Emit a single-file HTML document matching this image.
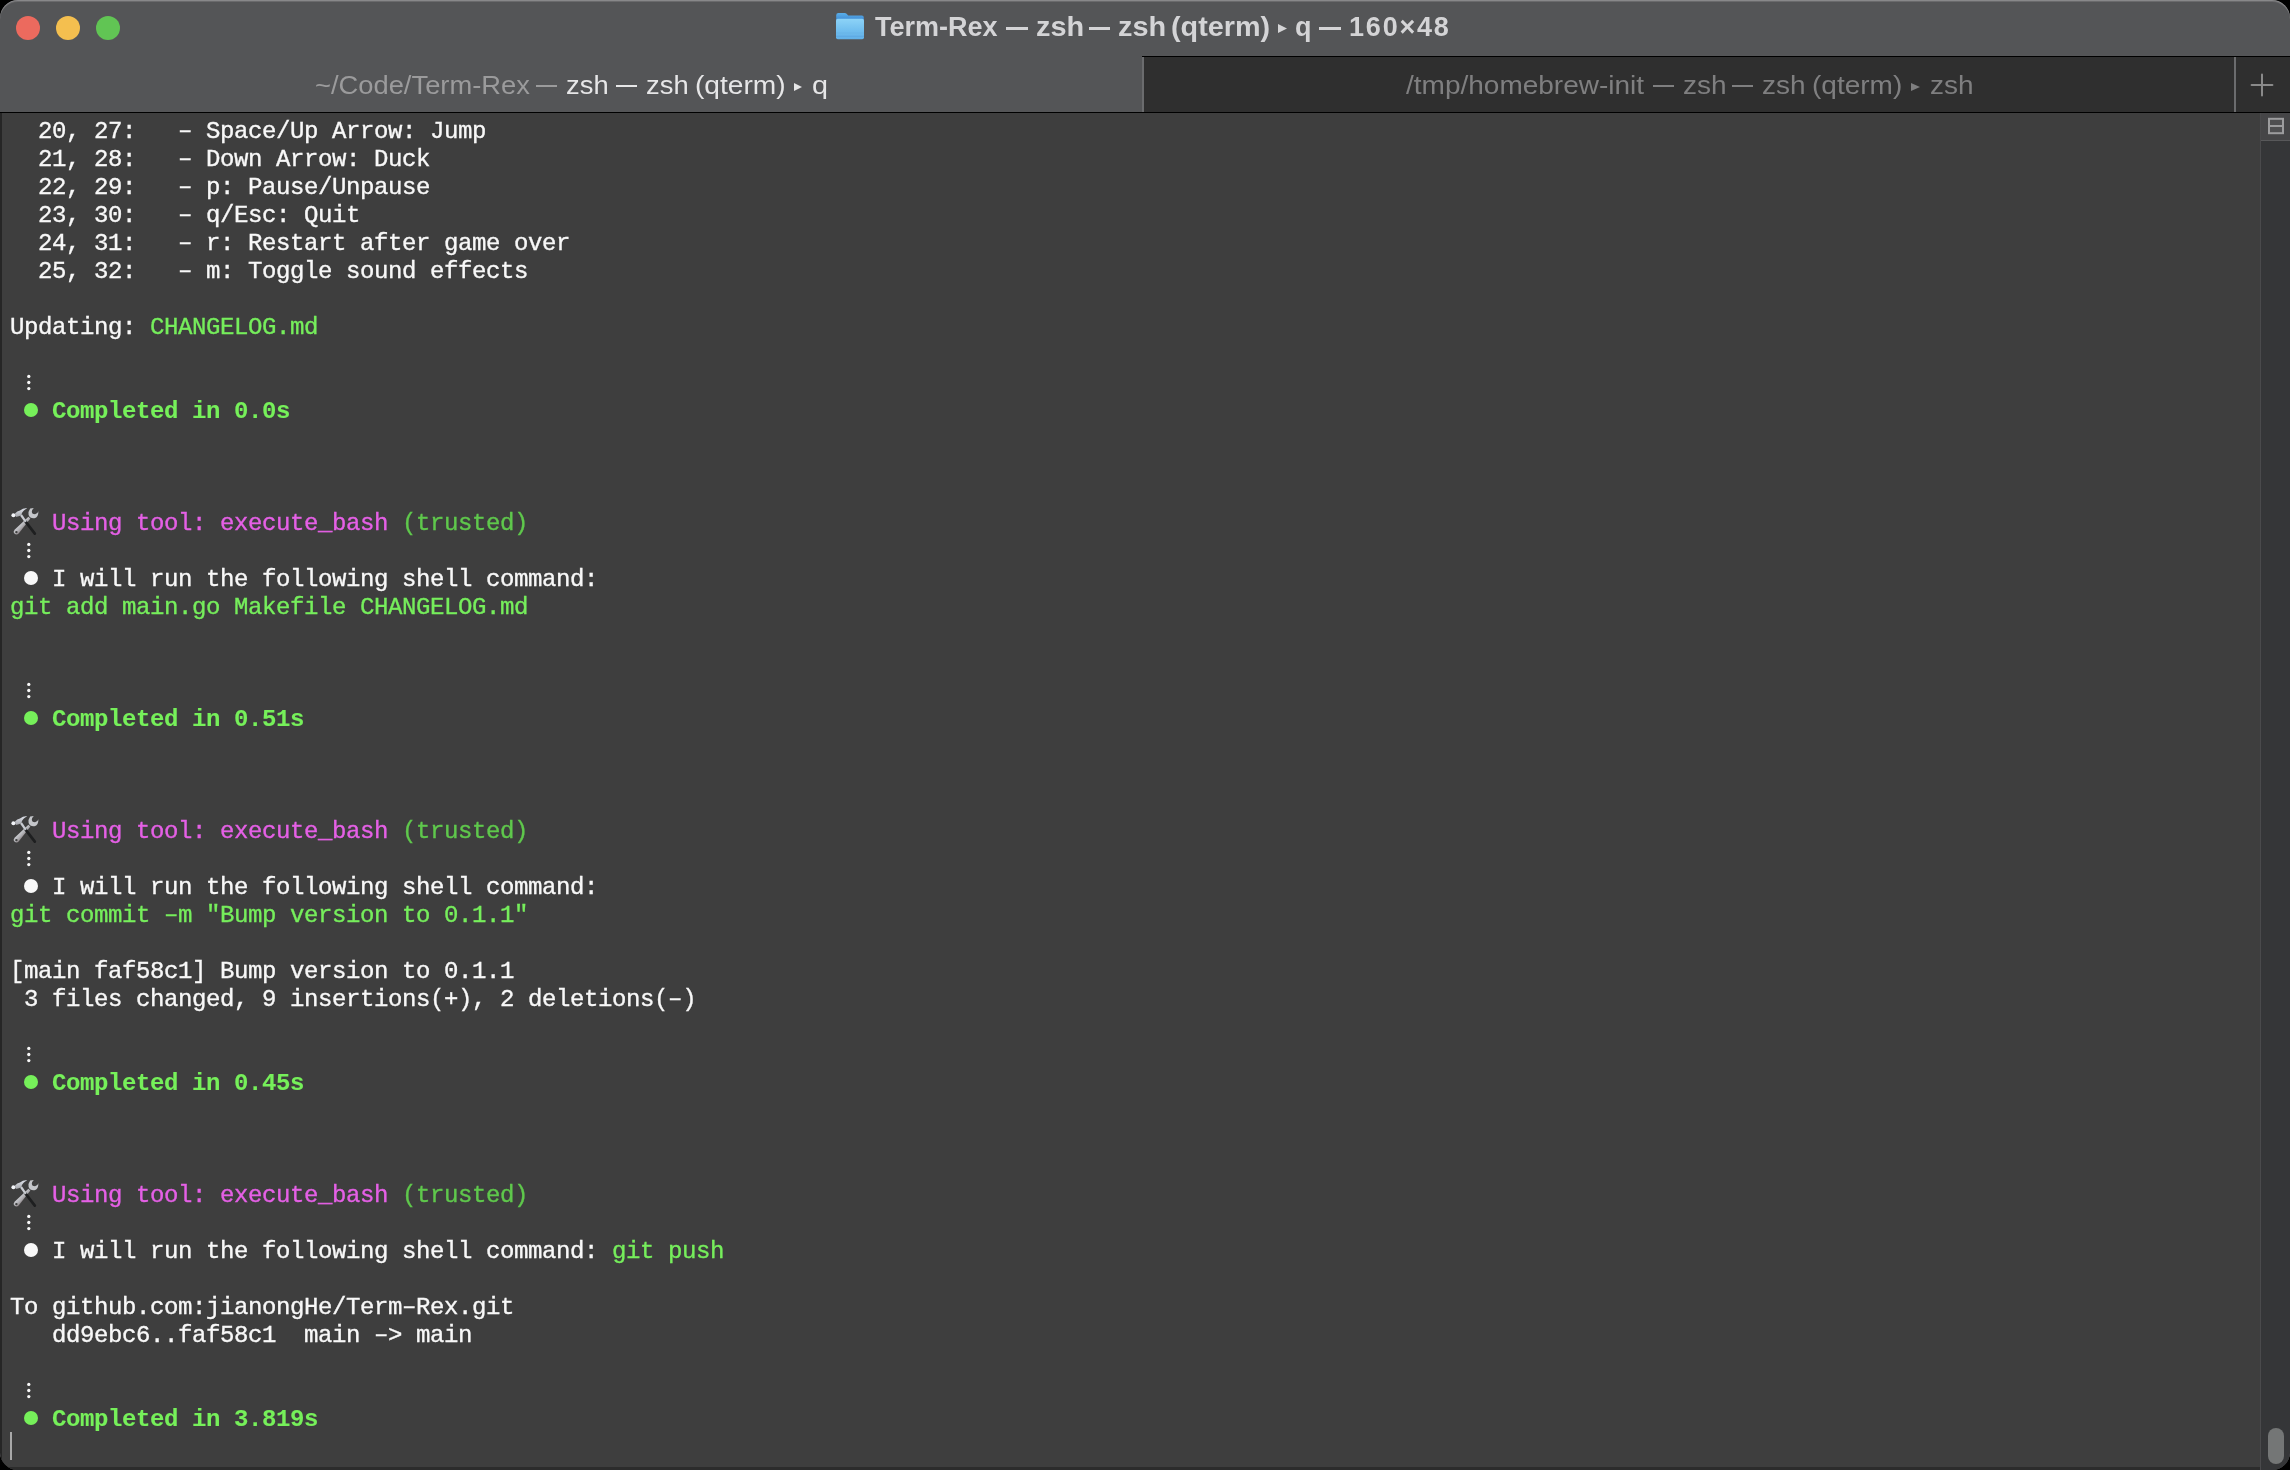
<!DOCTYPE html>
<html><head><meta charset="utf-8"><style>
html,body{margin:0;padding:0;background:#000;width:2290px;height:1470px;overflow:hidden}
.win{position:absolute;left:0;top:0;width:2290px;height:1470px;border-radius:18px;overflow:hidden;background:#3e3e3e}
.title{position:absolute;left:0;top:0;width:2290px;height:56px;background:#545557}
.light{position:absolute;top:16px;width:24px;height:24px;border-radius:50%}
.ttw{position:absolute;will-change:transform;font:bold 27px/34px "Liberation Sans",sans-serif;white-space:pre}
.tabs{position:absolute;left:0;top:56px;width:2290px;height:56px;background:#2f2f2f}
.tab1{position:absolute;left:0;top:0;width:1142px;height:56px;background:#545557}
.tline{position:absolute;left:1142px;top:0;width:1148px;height:1px;background:#000}
.div{position:absolute;top:1px;width:2px;height:55px;background:#6b6c6e}
.tbw{position:absolute;will-change:transform;font:25px/32px "Liberation Sans",sans-serif;white-space:pre}
.tri{font-size:14px;vertical-align:2px}
.bline{position:absolute;left:0;top:112px;width:2290px;height:1px;background:#000}
.term{position:absolute;left:0;top:113px;width:2290px;height:1357px;background:#3e3e3e}
.row{position:absolute;left:0;height:28px;width:2250px;will-change:transform}
.t{position:absolute;top:2px;font:24px/28px "Liberation Mono",monospace;letter-spacing:-0.4px;white-space:pre;color:#f8f8f8;-webkit-text-stroke:0.35px currentColor}
.hy{position:relative;top:-1.5px}
.b{font-weight:bold;-webkit-text-stroke:0.1px currentColor}
.bul{position:absolute;top:6.8px;width:14.2px;height:14.2px;border-radius:50%}
.dots{position:absolute;top:0;width:14px;height:28px}
.dots i{position:absolute;left:2.9px;width:3.8px;height:3.8px;border-radius:50%;background:#f2f2f2}
.dots i:nth-child(1){top:6.5px}.dots i:nth-child(2){top:12.6px}.dots i:nth-child(3){top:18.7px}
.ham{position:absolute;left:6px;top:-4px}
.sb{position:absolute;left:2260px;top:113px;width:30px;height:1357px;background:#353638;border-left:1px solid #4a4a4c;box-sizing:border-box}
.sbh{position:absolute;left:0;top:0;width:29px;height:28px;background:#454547;border-bottom:1px solid #58585a;box-sizing:border-box}
.thumb{position:absolute;left:7px;top:1315px;width:16px;height:36px;border-radius:8px;background:#747676}
.cursor{position:absolute;left:10px;top:1432px;width:2px;height:28px;background:#a8a8a8}
.lb{position:absolute;left:0;top:113px;width:2px;height:1357px;background:#262626}
.edge{position:absolute;left:0;top:0;width:2290px;height:1470px;border-radius:18px;box-shadow:inset 0 1px 0 0 #88888a,inset 0 2px 0 0 #6a6a6c;pointer-events:none}
.btm{position:absolute;left:0;top:1467px;width:2260px;height:3px;background:#2c2c2c}
</style></head><body><div class="win">
<div class="title">
<div class="light" style="left:16px;background:#ec6a5e"></div>
<div class="light" style="left:56px;background:#f4bf4f"></div>
<div class="light" style="left:96px;background:#61c554"></div>
</div>
<svg width="30" height="28" viewBox="0 0 30 28" style="position:absolute;left:835px;top:12px"><defs><linearGradient id="fg" x1="0" y1="0" x2="0" y2="1"><stop offset="0" stop-color="#8dd3f7"/><stop offset="0.5" stop-color="#74c1f0"/><stop offset="1" stop-color="#62b0e8"/></linearGradient><linearGradient id="fb" x1="0" y1="0" x2="0" y2="1"><stop offset="0" stop-color="#5aaee8"/><stop offset="1" stop-color="#3b86d2"/></linearGradient></defs>
<path d="M1.2 3.2 Q1.2 1 3.4 1 L9.6 1 Q10.8 1 11.6 1.8 L13.2 3.6 L26.8 3.6 Q28.8 3.6 28.8 5.6 L28.8 9 L1.2 9 Z" fill="url(#fb)"/>
<rect x="1" y="6.8" width="28" height="20.4" rx="1.8" fill="url(#fg)"/>
<rect x="1" y="20.6" width="28" height="1" fill="#68b4e6" opacity="0.8"/>
<rect x="1" y="23.8" width="28" height="0.9" fill="#5aa4de" opacity="0.8"/>
</svg>
<span class="ttw" style="left:875px;top:9.8px;color:#d4d4d6;">Term-Rex</span>
<div style="position:absolute;left:1006px;top:26.5px;width:22px;height:3.2px;background:#d4d4d6"></div>
<span class="ttw" style="left:1036px;top:9.8px;color:#d4d4d6;transform:scaleX(1.07);transform-origin:0 0;">zsh</span>
<div style="position:absolute;left:1089px;top:26.5px;width:21px;height:3.2px;background:#d4d4d6"></div>
<span class="ttw" style="left:1118px;top:9.8px;color:#d4d4d6;transform:scaleX(1.07);transform-origin:0 0;">zsh</span>
<span class="ttw" style="left:1171px;top:9.8px;color:#d4d4d6;transform:scaleX(1.065);transform-origin:0 0;">(qterm)</span>
<svg style="position:absolute;left:1278px;top:24px" width="9" height="9" viewBox="0 0 10 10" preserveAspectRatio="none"><path d="M0 0L10 5L0 10Z" fill="#d4d4d6"/></svg>
<span class="ttw" style="left:1295px;top:9.8px;color:#d4d4d6;">q</span>
<div style="position:absolute;left:1319px;top:26.5px;width:22px;height:3.2px;background:#d4d4d6"></div>
<span class="ttw" style="left:1349px;top:9.8px;color:#d4d4d6;letter-spacing:1.8px;">160×48</span>
<div class="tabs">
<div class="tab1"></div>
<div class="tline"></div>
<div class="div" style="left:1142px"></div>
<div class="div" style="left:2234px"></div>
<span class="tbw" style="left:315px;top:12.7px;color:#9b9b9c;transform:scaleX(1.093);transform-origin:0 0;">~/Code/Term-Rex</span>
<div style="position:absolute;left:536px;top:29.200000000000003px;width:21px;height:2.2px;background:#9b9b9c"></div>
<span class="tbw" style="left:566px;top:12.7px;color:#e6e6e7;transform:scaleX(1.095);transform-origin:0 0;">zsh</span>
<div style="position:absolute;left:616px;top:29.200000000000003px;width:21px;height:2.2px;background:#e6e6e7"></div>
<span class="tbw" style="left:645.5px;top:12.7px;color:#e6e6e7;transform:scaleX(1.095);transform-origin:0 0;">zsh</span>
<span class="tbw" style="left:695px;top:12.7px;color:#e6e6e7;transform:scaleX(1.125);transform-origin:0 0;">(qterm)</span>
<svg style="position:absolute;left:794px;top:26.799999999999997px" width="8" height="8" viewBox="0 0 10 10" preserveAspectRatio="none"><path d="M0 0L10 5L0 10Z" fill="#e6e6e7"/></svg>
<span class="tbw" style="left:811.5px;top:12.7px;color:#e6e6e7;transform:scaleX(1.15);transform-origin:0 0;">q</span>
<span class="tbw" style="left:1405.5px;top:12.7px;color:#7f7f80;transform:scaleX(1.12);transform-origin:0 0;">/tmp/homebrew-init</span>
<div style="position:absolute;left:1653px;top:29.200000000000003px;width:21px;height:2.2px;background:#7f7f80"></div>
<span class="tbw" style="left:1683px;top:12.7px;color:#7f7f80;transform:scaleX(1.12);transform-origin:0 0;">zsh</span>
<div style="position:absolute;left:1732px;top:29.200000000000003px;width:21px;height:2.2px;background:#7f7f80"></div>
<span class="tbw" style="left:1762px;top:12.7px;color:#7f7f80;transform:scaleX(1.12);transform-origin:0 0;">zsh</span>
<span class="tbw" style="left:1811.5px;top:12.7px;color:#7f7f80;transform:scaleX(1.12);transform-origin:0 0;">(qterm)</span>
<svg style="position:absolute;left:1911px;top:26.799999999999997px" width="9" height="8" viewBox="0 0 10 10" preserveAspectRatio="none"><path d="M0 0L10 5L0 10Z" fill="#7f7f80"/></svg>
<span class="tbw" style="left:1929.5px;top:12.7px;color:#7f7f80;transform:scaleX(1.12);transform-origin:0 0;">zsh</span>
<svg style="position:absolute;left:2250px;top:17px" width="24" height="24" viewBox="0 0 24 24"><path d="M12 1.6V22.4M1.6 12H22.4" stroke="#8a8a8a" stroke-width="2" stroke-linecap="round"/></svg>
</div>
<div class="bline"></div>
<div class="term">
</div>
<div class="lb"></div>
<div class="row" style="top:116px"><span class="t " style="left:38.00px;color:#f8f8f8">20, 27:   <span class=hy>–</span> Space/Up Arrow: Jump</span></div>
<div class="row" style="top:144px"><span class="t " style="left:38.00px;color:#f8f8f8">21, 28:   <span class=hy>–</span> Down Arrow: Duck</span></div>
<div class="row" style="top:172px"><span class="t " style="left:38.00px;color:#f8f8f8">22, 29:   <span class=hy>–</span> p: Pause/Unpause</span></div>
<div class="row" style="top:200px"><span class="t " style="left:38.00px;color:#f8f8f8">23, 30:   <span class=hy>–</span> q/Esc: Quit</span></div>
<div class="row" style="top:228px"><span class="t " style="left:38.00px;color:#f8f8f8">24, 31:   <span class=hy>–</span> r: Restart after game over</span></div>
<div class="row" style="top:256px"><span class="t " style="left:38.00px;color:#f8f8f8">25, 32:   <span class=hy>–</span> m: Toggle sound effects</span></div>
<div class="row" style="top:312px"><span class="t " style="left:10.00px;color:#f8f8f8">Updating: </span><span class="t " style="left:150.00px;color:#76ee5c">CHANGELOG.md</span></div>
<div class="row" style="top:368px"><svg class="dots" style="left:24.0px" width="14" height="28" viewBox="0 0 14 28"><circle cx="4.8" cy="8.4" r="1.65" fill="#f8f8f8"/><circle cx="4.8" cy="14.5" r="1.65" fill="#f8f8f8"/><circle cx="4.8" cy="20.6" r="1.65" fill="#f8f8f8"/></svg></div>
<div class="row" style="top:396px"><span class="bul" style="left:24px;background:#76f05a"></span><span class="t b" style="left:52.00px;color:#76f05a">Completed in 0.0s</span></div>
<div class="row" style="top:508px"><svg class="ham" width="36" height="36" viewBox="0 0 36 36"><defs><linearGradient id="hg" x1="0" y1="0" x2="0" y2="1"><stop offset="0" stop-color="#dfe3ec"/><stop offset="1" stop-color="#a4a5aa"/></linearGradient><linearGradient id="wg" x1="0.3" y1="0.3" x2="0.7" y2="0.7"><stop offset="0" stop-color="#dfe1e6"/><stop offset="0.55" stop-color="#b0b0b4"/><stop offset="1" stop-color="#7a6a6c"/></linearGradient></defs>
<path d="M22.4 12.8 L24.4 14.6 L12.9 29.3 Q10.6 31.6 8.4 29.6 Q6.8 28 8.6 25.8 Z" fill="url(#wg)"/>
<circle cx="10.4" cy="28.1" r="1.2" fill="#3e3e3e"/>
<path d="M24.2 4.2 Q22 7 22.6 10.8 Q24 14.5 28.5 14 Q32.5 13 32.4 7 Q31.5 9.8 29 10 Q26 10 25.8 7.5 Q25.6 5.5 27.8 3.6 Z" fill="#c4c6ca" transform="translate(0 0.3)"/>
<path d="M19.6 17.6 L28.8 29.6" stroke="#1e1f20" stroke-width="2.7" stroke-linecap="round"/>
<path d="M15 11 L19.8 17.8" stroke="#c9ccd2" stroke-width="2.2"/>
<path d="M9 9.4 Q11 7 14 6.6 Q17.6 3.8 21.2 4.4 Q16.6 5.8 15.2 11.2 Q13 12.6 9.8 12.9 Z" fill="url(#hg)"/>
<circle cx="7.4" cy="11.2" r="2" fill="#f2f4f8"/>
</svg><span class="t " style="left:52.00px;color:#e560e6">Using tool: execute_bash </span><span class="t " style="left:402.00px;color:#5fc84c">(trusted)</span></div>
<div class="row" style="top:536px"><svg class="dots" style="left:24.0px" width="14" height="28" viewBox="0 0 14 28"><circle cx="4.8" cy="8.4" r="1.65" fill="#f8f8f8"/><circle cx="4.8" cy="14.5" r="1.65" fill="#f8f8f8"/><circle cx="4.8" cy="20.6" r="1.65" fill="#f8f8f8"/></svg></div>
<div class="row" style="top:564px"><span class="bul" style="left:24px;background:#f8f8f8"></span><span class="t " style="left:52.00px;color:#f8f8f8">I will run the following shell command:</span></div>
<div class="row" style="top:592px"><span class="t " style="left:10.00px;color:#76ee5c">git add main.go Makefile CHANGELOG.md</span></div>
<div class="row" style="top:676px"><svg class="dots" style="left:24.0px" width="14" height="28" viewBox="0 0 14 28"><circle cx="4.8" cy="8.4" r="1.65" fill="#f8f8f8"/><circle cx="4.8" cy="14.5" r="1.65" fill="#f8f8f8"/><circle cx="4.8" cy="20.6" r="1.65" fill="#f8f8f8"/></svg></div>
<div class="row" style="top:704px"><span class="bul" style="left:24px;background:#76f05a"></span><span class="t b" style="left:52.00px;color:#76f05a">Completed in 0.51s</span></div>
<div class="row" style="top:816px"><svg class="ham" width="36" height="36" viewBox="0 0 36 36"><defs><linearGradient id="hg" x1="0" y1="0" x2="0" y2="1"><stop offset="0" stop-color="#dfe3ec"/><stop offset="1" stop-color="#a4a5aa"/></linearGradient><linearGradient id="wg" x1="0.3" y1="0.3" x2="0.7" y2="0.7"><stop offset="0" stop-color="#dfe1e6"/><stop offset="0.55" stop-color="#b0b0b4"/><stop offset="1" stop-color="#7a6a6c"/></linearGradient></defs>
<path d="M22.4 12.8 L24.4 14.6 L12.9 29.3 Q10.6 31.6 8.4 29.6 Q6.8 28 8.6 25.8 Z" fill="url(#wg)"/>
<circle cx="10.4" cy="28.1" r="1.2" fill="#3e3e3e"/>
<path d="M24.2 4.2 Q22 7 22.6 10.8 Q24 14.5 28.5 14 Q32.5 13 32.4 7 Q31.5 9.8 29 10 Q26 10 25.8 7.5 Q25.6 5.5 27.8 3.6 Z" fill="#c4c6ca" transform="translate(0 0.3)"/>
<path d="M19.6 17.6 L28.8 29.6" stroke="#1e1f20" stroke-width="2.7" stroke-linecap="round"/>
<path d="M15 11 L19.8 17.8" stroke="#c9ccd2" stroke-width="2.2"/>
<path d="M9 9.4 Q11 7 14 6.6 Q17.6 3.8 21.2 4.4 Q16.6 5.8 15.2 11.2 Q13 12.6 9.8 12.9 Z" fill="url(#hg)"/>
<circle cx="7.4" cy="11.2" r="2" fill="#f2f4f8"/>
</svg><span class="t " style="left:52.00px;color:#e560e6">Using tool: execute_bash </span><span class="t " style="left:402.00px;color:#5fc84c">(trusted)</span></div>
<div class="row" style="top:844px"><svg class="dots" style="left:24.0px" width="14" height="28" viewBox="0 0 14 28"><circle cx="4.8" cy="8.4" r="1.65" fill="#f8f8f8"/><circle cx="4.8" cy="14.5" r="1.65" fill="#f8f8f8"/><circle cx="4.8" cy="20.6" r="1.65" fill="#f8f8f8"/></svg></div>
<div class="row" style="top:872px"><span class="bul" style="left:24px;background:#f8f8f8"></span><span class="t " style="left:52.00px;color:#f8f8f8">I will run the following shell command:</span></div>
<div class="row" style="top:900px"><span class="t " style="left:10.00px;color:#76ee5c">git commit <span class=hy>–</span>m &quot;Bump version to 0.1.1&quot;</span></div>
<div class="row" style="top:956px"><span class="t " style="left:10.00px;color:#f8f8f8">[main faf58c1] Bump version to 0.1.1</span></div>
<div class="row" style="top:984px"><span class="t " style="left:24.00px;color:#f8f8f8">3 files changed, 9 insertions(+), 2 deletions(<span class=hy>–</span>)</span></div>
<div class="row" style="top:1040px"><svg class="dots" style="left:24.0px" width="14" height="28" viewBox="0 0 14 28"><circle cx="4.8" cy="8.4" r="1.65" fill="#f8f8f8"/><circle cx="4.8" cy="14.5" r="1.65" fill="#f8f8f8"/><circle cx="4.8" cy="20.6" r="1.65" fill="#f8f8f8"/></svg></div>
<div class="row" style="top:1068px"><span class="bul" style="left:24px;background:#76f05a"></span><span class="t b" style="left:52.00px;color:#76f05a">Completed in 0.45s</span></div>
<div class="row" style="top:1180px"><svg class="ham" width="36" height="36" viewBox="0 0 36 36"><defs><linearGradient id="hg" x1="0" y1="0" x2="0" y2="1"><stop offset="0" stop-color="#dfe3ec"/><stop offset="1" stop-color="#a4a5aa"/></linearGradient><linearGradient id="wg" x1="0.3" y1="0.3" x2="0.7" y2="0.7"><stop offset="0" stop-color="#dfe1e6"/><stop offset="0.55" stop-color="#b0b0b4"/><stop offset="1" stop-color="#7a6a6c"/></linearGradient></defs>
<path d="M22.4 12.8 L24.4 14.6 L12.9 29.3 Q10.6 31.6 8.4 29.6 Q6.8 28 8.6 25.8 Z" fill="url(#wg)"/>
<circle cx="10.4" cy="28.1" r="1.2" fill="#3e3e3e"/>
<path d="M24.2 4.2 Q22 7 22.6 10.8 Q24 14.5 28.5 14 Q32.5 13 32.4 7 Q31.5 9.8 29 10 Q26 10 25.8 7.5 Q25.6 5.5 27.8 3.6 Z" fill="#c4c6ca" transform="translate(0 0.3)"/>
<path d="M19.6 17.6 L28.8 29.6" stroke="#1e1f20" stroke-width="2.7" stroke-linecap="round"/>
<path d="M15 11 L19.8 17.8" stroke="#c9ccd2" stroke-width="2.2"/>
<path d="M9 9.4 Q11 7 14 6.6 Q17.6 3.8 21.2 4.4 Q16.6 5.8 15.2 11.2 Q13 12.6 9.8 12.9 Z" fill="url(#hg)"/>
<circle cx="7.4" cy="11.2" r="2" fill="#f2f4f8"/>
</svg><span class="t " style="left:52.00px;color:#e560e6">Using tool: execute_bash </span><span class="t " style="left:402.00px;color:#5fc84c">(trusted)</span></div>
<div class="row" style="top:1208px"><svg class="dots" style="left:24.0px" width="14" height="28" viewBox="0 0 14 28"><circle cx="4.8" cy="8.4" r="1.65" fill="#f8f8f8"/><circle cx="4.8" cy="14.5" r="1.65" fill="#f8f8f8"/><circle cx="4.8" cy="20.6" r="1.65" fill="#f8f8f8"/></svg></div>
<div class="row" style="top:1236px"><span class="bul" style="left:24px;background:#f8f8f8"></span><span class="t " style="left:52.00px;color:#f8f8f8">I will run the following shell command:</span><span class="t " style="left:612.00px;color:#76ee5c">git push</span></div>
<div class="row" style="top:1292px"><span class="t " style="left:10.00px;color:#f8f8f8">To github.com:jianongHe/Term<span class=hy>–</span>Rex.git</span></div>
<div class="row" style="top:1320px"><span class="t " style="left:52.00px;color:#f8f8f8">dd9ebc6..faf58c1  main <span class=hy>–</span>&gt; main</span></div>
<div class="row" style="top:1376px"><svg class="dots" style="left:24.0px" width="14" height="28" viewBox="0 0 14 28"><circle cx="4.8" cy="8.4" r="1.65" fill="#f8f8f8"/><circle cx="4.8" cy="14.5" r="1.65" fill="#f8f8f8"/><circle cx="4.8" cy="20.6" r="1.65" fill="#f8f8f8"/></svg></div>
<div class="row" style="top:1404px"><span class="bul" style="left:24px;background:#76f05a"></span><span class="t b" style="left:52.00px;color:#76f05a">Completed in 3.819s</span></div>
<div class="cursor"></div>
<div class="sb"><div class="sbh"><svg style="position:absolute;left:6px;top:4px" width="18" height="18" viewBox="0 0 18 18"><rect x="2" y="1.8" width="14" height="14.4" fill="#4f4f51" stroke="#9c9c9e" stroke-width="2"/><path d="M2 9H16" stroke="#9c9c9e" stroke-width="2"/></svg></div><div class="thumb"></div></div>
<div class="btm"></div>
<div class="edge"></div>
</div></body></html>
